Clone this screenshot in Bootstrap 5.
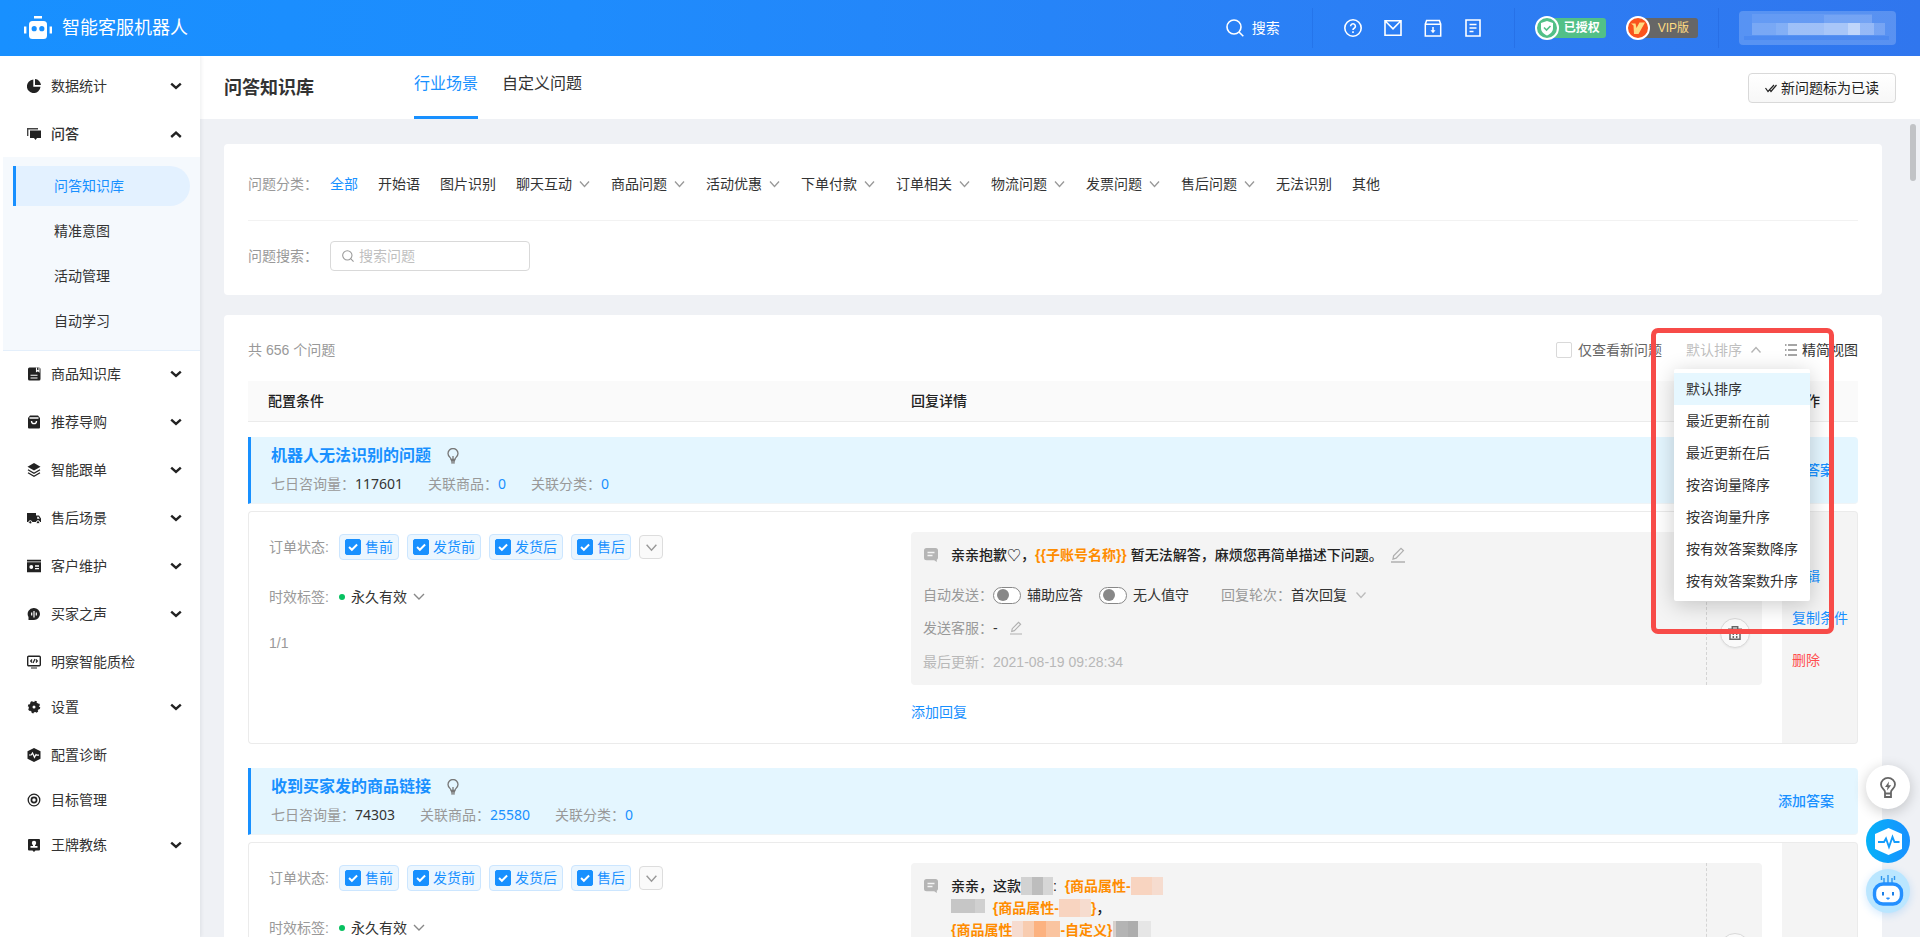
<!DOCTYPE html>
<html lang="zh-CN">
<head>
<meta charset="utf-8">
<meta name="viewport" content="width=device-width, initial-scale=1">
<title>智能客服机器人 - 问答知识库</title>
<link href="https://cdn.jsdelivr.net/npm/bootstrap@5.3.0/dist/css/bootstrap.min.css" rel="stylesheet">
<style>
  :root { --brand: #1890ff; --ink: #333; --dim: #999; --pale: #e6f7ff; --soft: #f4f4f4; --line: #ebebeb; }
  body { font: 14px/22px "Liberation Sans", "Noto Sans CJK SC", sans-serif; color: var(--ink); background: #eff1f5; }
  a { color: inherit; text-decoration: none; }
  svg { display: block; flex: none; }
  button { color: inherit; }
  .shell { height: 100vh; overflow: hidden; }
  .text-dim { color: var(--dim); }
  .text-brand { color: var(--brand); }
  .icon-btn { background: none; border: 0; padding: 0; }

  /* top bar */
  .topbar { height: 56px; flex: none; color: #fff; background: linear-gradient(90deg, #1890ff 0%, #1e8cfd 30%, #2b7ff5 70%, #3076ee 100%); padding: 0 24px; }
  .brand-name { font-size: 18px; margin-left: 10px; }
  .top-split { width: 1px; height: 40px; background: rgba(0, 40, 160, .12); margin: 0 20px 0 32px; }
  .top-split.tight { margin-left: 20px; }
  .top-split.flush { margin-left: 0; }
  .top-icons { gap: 22px; margin: 0 32px 0 11px; }
  .plan { height: 20px; font-size: 12px; font-weight: 700; line-height: 20px; border-radius: 3px; padding: 0 6px 0 17px; margin-left: 12px; position: relative; }
  .plan svg { position: absolute; left: -12px; top: -2px; }
  .plan-ok { background: #52c087; }
  .plan-vip { background: #666; color: #ffdc82; font-weight: 400; padding: 0 9px 0 20px; margin-left: 32px; }
  .account { height: 34px; width: 157px; border-radius: 4px; background: rgba(255, 255, 255, .2); padding: 3px 5px; }

  /* side menu */
  .side { width: 200px; background: #fff; flex: none; padding-top: 7px; z-index: 2; box-shadow: 1px 0 4px rgba(0, 21, 41, .08); }
  .side-item { height: 45px; padding: 0 18px 0 27px; width: 100%; text-align: left; }
  .side-item span { margin-left: 10px; flex: 1; }
  .has-sub { margin-bottom: 3px; }
  .has-sub.is-open { margin-bottom: 1px; font-weight: 500; }
  .side-sub { margin-left: 3px; background: #f5f9fd; padding: 9px 10px; border-bottom: 1px solid #e4effb; }
  .side-sub a { display: block; height: 40px; line-height: 40px; padding-left: 41px; margin-bottom: 5px; }
  .side-sub a:last-child { margin-bottom: 0; }
  .side-sub a.active { background: #e3f1ff; color: var(--brand); border-left: 3px solid var(--brand); padding-left: 38px; border-radius: 0 20px 20px 0; }

  /* page head */
  .page-head { height: 63px; flex: none; background: #fff; padding: 0 24px; }
  .page-head h1 { font-size: 18px; line-height: 24px; font-weight: 700; margin: 0; width: 190px; }
  .tab-link { height: 63px; line-height: 56px; font-size: 16px; margin-right: 24px; }
  .tab-link.active { color: var(--brand); border-bottom: 3px solid var(--brand); }
  .btn-read { height: 30px; font-size: 14px; line-height: 20px; padding: 0 16px; border: 1px solid #d9d9d9; background: linear-gradient(#fff, #f7f7f7); color: #222; border-radius: 4px; }

  .scroller { position: relative; overflow: hidden; flex: 1; padding: 25px 38px 0 24px; }
  .thumb { position: absolute; right: 4px; top: 5px; width: 6px; height: 57px; border-radius: 3px; background: #c1c3c6; }
  .panel { background: #fff; border-radius: 4px; padding: 24px; }
  .panel + .panel { margin-top: 20px; }
  .filter-row { height: 52px; padding-bottom: 20px; }
  .filter-row > .lbl, .search-row > .lbl { width: 82px; color: var(--dim); }
  .cats { gap: 20px; }
  .cats a, .cats button { display: flex; align-items: center; gap: 6px; }
  .search-row { border-top: 1px solid #f2f2f2; padding-top: 20px; }
  .search-box { width: 200px; height: 30px; border: 1px solid #d9d9d9; border-radius: 4px; padding: 0 11px; }
  .search-box input { border: 0; outline: 0; width: 100%; padding: 0; margin-left: 5px; background: none; }
  .search-box input::placeholder { color: #bfbfbf; opacity: 1; }

  /* list toolbar */
  .tools { margin-bottom: 20px; position: relative; }
  .tick { appearance: none; width: 16px; height: 16px; border: 1px solid #d9d9d9; border-radius: 2px; background: #fff; margin: 0; flex: none; }
  .tick:checked { border-color: var(--brand); background: var(--brand) url("data:image/svg+xml,%3Csvg xmlns='http://www.w3.org/2000/svg' viewBox='0 0 16 16'%3E%3Cpath d='M3.5 8l3.2 3.2 6-6' fill='none' stroke='%23fff' stroke-width='2.2'/%3E%3C/svg%3E") center/14px no-repeat; }
  .only-new { margin-left: 6px; color: #666; }
  .sort-btn { color: #bfbfbf; gap: 8px; margin: 0 22px 0 24px; }
  .sort-menu.dropdown-menu { display: block; right: 48px; top: 30px; min-width: 0; width: 136px; padding: 4px 0; border: 0; border-radius: 2px; font-size: 14px; box-shadow: 0 4px 22px rgba(0, 0, 0, .2); z-index: 5; }
  .sort-menu .dropdown-item { height: 32px; line-height: 32px; padding: 0 12px; color: var(--ink); }
  .sort-menu .dropdown-item.active { background: var(--pale); }
  .callout-frame { position: absolute; right: 24px; top: -11px; width: 183px; height: 306px; border: 5px solid #f74b48; border-radius: 7px; z-index: 6; pointer-events: none; }

  /* question table */
  .qa-table { width: 100%; table-layout: fixed; border-collapse: separate; border-spacing: 0; }
  .qa-table col.c-cond { width: 40%; }
  .qa-table col.c-ops { width: 76px; }
  .qa-table td, .qa-table th { vertical-align: top; padding: 0; }
  .qa-table thead th { height: 41px; background: #fafafa; border-bottom: 1px solid var(--line); vertical-align: middle; font-weight: 500; color: #222; }
  .qa-table thead th:nth-child(1) { padding-left: 20px; }
  .qa-table thead th:nth-child(2) { padding-left: 19px; }
  .qa-table thead th:nth-child(3) { padding-left: 10px; }
  .qa-table .bar-cell { padding: 24px 0 7px; }
  .qa-table tbody:nth-of-type(1) .bar-cell { padding-top: 15px; }
  .qa-table tr.multi { height: 400px; }
  .q-bar { height: 67px; background: #e4f6ff; border-left: 3px solid var(--brand); border-bottom: 1px solid #f0f4f6; border-radius: 0 4px 4px 0; padding: 7px 24px 8px 20px; }
  .q-bar h2 { font-size: 16px; line-height: 24px; font-weight: 700; margin: 0 16px 0 0; }
  .q-stats { margin-top: 5px; gap: 25px; color: var(--dim); }
  .q-stats b { font: 400 14px/22px "Noto Sans", sans-serif; }
  .q-stats b.n { color: var(--ink); }
  .q-bar .add { font-weight: 500; }
  .qa-table .cond { border: 1px solid var(--line); border-right: 0; border-radius: 4px 0 0 4px; padding: 22px 20px 0; }
  .qa-table .detail { border: solid var(--line); border-width: 1px 0; padding: 20px 20px 20px 19px; }
  .qa-table .ops { border: 1px solid var(--line); border-left: 0; border-radius: 0 4px 4px 0; background: var(--soft); padding-left: 10px; vertical-align: middle; }
  .ops a { display: block; margin-bottom: 20px; color: var(--brand); }
  .ops a.del { color: #ff4d4f; }
  .row-lbl { width: 70px; color: var(--dim); flex: none; }
  .stage { height: 26px; border: 1px solid #cce6ff; background: #ebf6ff; border-radius: 4px; padding: 0 5px; color: var(--brand); gap: 4px; margin-right: 8px; }
  .more { width: 24px; height: 24px; border: 1px solid #ddd; border-radius: 4px; background: #fafafa; }
  .validity { margin: 26px 0 24px; }
  .dot { width: 6px; height: 6px; border-radius: 50%; background: #07c160; margin-right: 6px; }
  .pick { appearance: none; border: 0; padding: 0 18px 0 0; color: inherit; background: url("data:image/svg+xml,%3Csvg xmlns='http://www.w3.org/2000/svg' viewBox='0 0 12 12'%3E%3Cpath d='M1 3l5 5 5-5' fill='none' stroke='%23888' stroke-width='1.4'/%3E%3C/svg%3E") right center/12px no-repeat; }
  .turn-lbl { margin-left: 32px; }
  .pick.turn { padding-right: 20px; background-image: url("data:image/svg+xml,%3Csvg xmlns='http://www.w3.org/2000/svg' viewBox='0 0 12 12'%3E%3Cpath d='M1.5 3.500l4.500 5 4.500-5' fill='none' stroke='%23bbb' stroke-width='1.300'/%3E%3C/svg%3E"); }
  .reply { background: var(--soft); border-radius: 4px; min-height: 153px; }
  .multi .reply { min-height: 170px; }
  .reply-body { flex: 1; padding: 12px; border-right: 1px dashed #d4d4d4; }
  .reply-acts { width: 55px; gap: 18px; }
  .round { width: 30px; height: 30px; border-radius: 50%; border: 1px solid #d9d9d9; background: #fafafa; padding: 0; color: #666; box-shadow: 0 1px 2px rgba(0, 0, 0, .06); }
  .msg { font-weight: 500; color: #222; }
  .msg > svg { margin: 4px 13px 0 1px; }
  .msg .var { color: #ff8c00; font-weight: 700; }
  .auto { margin-top: 18px; }
  .agent { margin-top: 11px; }
  .agent button { margin-left: 12px; }
  .updated { margin-top: 12px; color: #b8b8b8; }
  .toggle.form-check-input { width: 28px; height: 17px; min-height: 0; margin: 0 6px 0 0; float: none; border: 1px solid #888; border-radius: 9px; background: #fff url("data:image/svg+xml,%3Csvg xmlns='http://www.w3.org/2000/svg' viewBox='-6 -6 12 12'%3E%3Ccircle r='6' fill='%23888'/%3E%3C/svg%3E") 3px center/12px no-repeat; }
  .mosaic { display: inline-block; vertical-align: top; height: 18px; margin-top: 2px; }
  .m-gray { width: 32px; background: linear-gradient(90deg, #d2d2d2 35%, #bdbdbd 35% 70%, #d6d6d6 70%); }
  .m-peach { width: 32px; background: linear-gradient(90deg, #f8d4c0 66%, #f6dccf 66%); }
  .m-flat { width: 34px; height: 14px; background: linear-gradient(90deg, #c6c6c6 70%, #d0d0d0 70%); }
  .m-orange { width: 48px; background: linear-gradient(90deg, #f6dcd0 22%, #f8ccb0 22% 46%, #fcb280 46% 70%, #fac4a0 70%); }
  .m-dark { width: 38px; background: linear-gradient(90deg, #d8d0cc 8%, #b4b4b4 8% 40%, #adadad 40% 66%, #e6e6e6 66%); }
  .add-reply { display: inline-block; margin-top: 16px; color: var(--brand); }

  /* floating helpers */
  .floats { position: fixed; right: 10px; bottom: 24px; z-index: 10; }
  .floats button { width: 44px; height: 44px; border-radius: 50%; border: 0; padding: 0; display: flex; align-items: center; justify-content: center; }
  .f-tip { background: #fff; box-shadow: 0 3px 14px rgba(0, 0, 0, .2); margin-bottom: 10px; color: #666; }
  .f-check { background: linear-gradient(90deg, #06b2f8, #1890ff); margin-bottom: 6px; }
  .f-bot { background: #bae6ff; box-shadow: 0 2px 8px rgba(24, 144, 255, .2); }
</style>
</head>
<body>
<svg width="0" height="0" class="position-absolute" aria-hidden="true">
  <symbol id="dn" viewBox="0 0 12 12"><path d="M1.500 3.500 6 8.500l4.500-5" fill="none" stroke="currentColor" stroke-width="1.300"/></symbol>
  <symbol id="caret" viewBox="0 0 10 10"><path d="M1 3l4 3.600L9 3" fill="none" stroke="#222" stroke-width="2"/></symbol>
  <symbol id="caret-up" viewBox="0 0 10 10"><path d="M1 7.500l4-3.600 4 3.600" fill="none" stroke="#222" stroke-width="2"/></symbol>
  <symbol id="lens" viewBox="0 0 18 18"><circle cx="8" cy="8" r="7" fill="none" stroke="currentColor" stroke-width="1.600"/><path d="M13 13l4.300 4.300" stroke="currentColor" stroke-width="1.600"/></symbol>
  <symbol id="bulb" viewBox="0 0 12 16"><path d="M4 11.500C4 9.500 1 8.600 1 5.500a5 5 0 0 1 10 0c0 3.100-3 4-3 6zM4 13h4M4.200 14.800h3.600M6 8v3" fill="none" stroke="#777" stroke-width="1.300"/></symbol>
  <symbol id="chat" viewBox="0 0 14 14"><path d="M2.500 0h9A2.500 2.500 0 0 1 14 2.500v7a2.500 2.500 0 0 1-1.200 2.200V14l-2.600-1.800H2.500A2.500 2.500 0 0 1 0 9.700V2.500A2.500 2.500 0 0 1 2.500 0z" fill="#b5b5b5"/><path d="M3.500 4.500h7M3.500 7.500h5" stroke="#f4f4f4" stroke-width="1.300"/></symbol>
  <symbol id="pen" viewBox="0 0 14 16"><path d="M2 12l.6-3.200L10 1.300l2.400 2.300-7.300 7.500zM0 15h14" fill="none" stroke="#b0b0b0" stroke-width="1.300"/></symbol>
  <symbol id="bin" viewBox="0 0 14 14"><path d="M0 3.200h14M4.300 3V.8h5.400V3M2 3.500v9.800h10V3.500M5.300 10v2M8.700 10v2M5.300 6v3M8.700 6v3" fill="none" stroke="currentColor" stroke-width="1.500"/></symbol>
</svg>

<div class="shell d-flex flex-column">
  <header class="topbar d-flex align-items-center">
    <svg width="28" height="24" viewBox="0 0 28 24"><path d="M10 0h8v2.600h-8zM0 10.500h2.400v7H0zM25.600 10.500H28v7h-2.400z" fill="#fff"/><rect x="5" y="5" width="18" height="18" rx="3.500" fill="#fff"/><circle cx="10.200" cy="12.700" r="2.600" fill="#1890ff"/><circle cx="17.800" cy="12.700" r="2.600" fill="#1890ff"/></svg>
    <span class="brand-name">智能客服机器人</span>
    <button class="icon-btn d-flex align-items-center ms-auto" type="button"><svg width="18" height="18" class="me-2"><use href="#lens"/></svg>搜索</button>
    <span class="top-split"></span>
    <nav class="top-icons d-flex align-items-center" aria-label="快捷入口">
      <a href="#" aria-label="帮助"><svg width="18" height="18" viewBox="0 0 18 18" fill="none" stroke="#fff" stroke-width="1.600"><circle cx="9" cy="9" r="8.200"/><path d="M6.600 7.200a2.400 2.400 0 1 1 3.600 2.100C9.300 9.800 9 10.200 9 11M9 12.300v1.700"/></svg></a>
      <a href="#" aria-label="消息"><svg width="18" height="18" viewBox="0 0 18 18" fill="none" stroke="#fff" stroke-width="1.600"><path d="M1 1.800h16v14.400H1zM1.500 2.300 9 9.800l7.500-7.500"/></svg></a>
      <a href="#" aria-label="下载"><svg width="18" height="18" viewBox="0 0 18 18" fill="none" stroke="#fff" stroke-width="1.500"><path d="M1.300 5.300h15.400V17H1.300zM1.300 5.300 2.600 1.500h12.800l1.300 3.800M9 8v5"/><path d="M6.500 11.300h5L9 14.200z" fill="#fff" stroke="none"/></svg></a>
      <a href="#" aria-label="文档"><svg width="18" height="18" viewBox="0 0 18 18" fill="none" stroke="#fff" stroke-width="1.600"><path d="M2 1h14v16H2zM5.500 5.500h7M5.500 9h7M5.500 12.500h4"/></svg></a>
    </nav>
    <span class="top-split flush"></span>
    <span class="plan plan-ok"><svg width="24" height="24" viewBox="0 0 24 24"><circle cx="12" cy="12" r="11" fill="#52c087" stroke="#fff" stroke-width="2"/><path d="M12 5l6 2v5c0 4-3 6-6 7.500C9 18 6 16 6 12V7z" fill="#fff"/><path d="M9 11.500l2.500 2.500 4-4" fill="none" stroke="#52c087" stroke-width="1.600"/></svg>已授权</span>
    <span class="plan plan-vip"><svg width="24" height="24" viewBox="0 0 24 24"><circle cx="12" cy="12" r="11" fill="#fa541c" stroke="#fff" stroke-width="2"/><path d="M5 7.500h4.500L10.500 12 13.500 6.500h5.500L12.500 18H8L7.500 9.500z" fill="#ffdc82"/></svg>VIP版</span>
    <span class="top-split tight"></span>
    <div class="account" role="img" aria-label="当前账号">
      <svg width="146" height="27" viewBox="0 0 146 27" shape-rendering="crispEdges"><g fill="#fff"><path d="M8 0h120v9H8z" opacity=".08"/><path d="M80 1h48v8H80z" opacity=".1"/><path d="M8 9h24v12H8z" opacity=".2"/><path d="M32 9h12v12H32z" opacity=".26"/><path d="M44 9h36v12H44z" opacity=".42"/><path d="M80 9h24v12H80z" opacity=".48"/><path d="M104 9h12v12h-12z" opacity=".62"/><path d="M116 9h14v12h-14z" opacity=".36"/><path d="M130 9h11v12h-11z" opacity=".18"/></g><path d="M0 22h145v4H0z" fill="#1d6bea" opacity=".2"/></svg>
    </div>
  </header>

  <div class="d-flex flex-fill overflow-hidden">
    <aside class="side">
      <button class="side-item has-sub icon-btn d-flex align-items-center"><svg width="14" height="14" viewBox="0 0 14 14" fill="#222"><path d="M6.300.5V7.700H13.500A6.800 6.800 0 1 1 6.300.5z"/><path d="M8 0a6.500 6.500 0 0 1 6 6H8z"/></svg><span>数据统计</span><svg width="12" height="12"><use href="#caret"/></svg></button>
      <button class="side-item has-sub is-open icon-btn d-flex align-items-center" aria-expanded="true"><svg width="14" height="14" viewBox="0 0 14 14"><path d="M.7 9V1.700H11" fill="none" stroke="#444" stroke-width="1.400"/><path d="M3 3.500h11v7.500h-4l-1.500 2L7 11H3z" fill="#222"/></svg><span>问答</span><svg width="12" height="12"><use href="#caret-up"/></svg></button>
      <nav class="side-sub">
        <a href="#" class="active">问答知识库</a>
        <a href="#">精准意图</a>
        <a href="#">活动管理</a>
        <a href="#">自动学习</a>
      </nav>
      <button class="side-item has-sub icon-btn d-flex align-items-center"><svg width="14" height="14" viewBox="0 0 14 14"><rect x="1" y=".5" width="12.500" height="13" rx="1.500" fill="#222"/><path d="M9.500.5v4l1.300-1 1.200 1v-4M3.500 8.300h7M3.500 11h7" stroke="#fff" stroke-width="1.100" fill="none"/></svg><span>商品知识库</span><svg width="12" height="12"><use href="#caret"/></svg></button>
      <button class="side-item has-sub icon-btn d-flex align-items-center"><svg width="14" height="14" viewBox="0 0 14 14"><path d="M3 .5h8l2 2.500v9.500a1 1 0 0 1-1 1H2a1 1 0 0 1-1-1V3z" fill="#222"/><path d="M2.500 3h9M4.500 6a2.500 2.700 0 0 0 5 0" stroke="#fff" stroke-width="1.300" fill="none"/></svg><span>推荐导购</span><svg width="12" height="12"><use href="#caret"/></svg></button>
      <button class="side-item has-sub icon-btn d-flex align-items-center"><svg width="14" height="14" viewBox="0 0 14 14"><path d="M7 0l6.500 3.700L7 7.500.5 3.700z" fill="#222"/><path d="M1 6.700l6 3.500 6-3.500M1 9.700l6 3.500 6-3.500" stroke="#222" stroke-width="1.300" fill="none"/></svg><span>智能跟单</span><svg width="12" height="12"><use href="#caret"/></svg></button>
      <button class="side-item has-sub icon-btn d-flex align-items-center"><svg width="14" height="14" viewBox="0 0 14 14"><path d="M0 2h9v9H0zM9 4.500h3l2 3V11H9z" fill="#222"/><circle cx="3.300" cy="11.300" r="1.600" fill="#222" stroke="#fff"/><circle cx="11" cy="11.300" r="1.600" fill="#222" stroke="#fff"/><path d="M10.200 5.700h1.300l1.200 2h-2.500z" fill="#fff"/></svg><span>售后场景</span><svg width="12" height="12"><use href="#caret"/></svg></button>
      <button class="side-item has-sub icon-btn d-flex align-items-center"><svg width="14" height="14" viewBox="0 0 14 14"><path d="M0 .8h14v1.600H0zM0 3.200h14v10H0z" fill="#222"/><circle cx="4.300" cy="8" r="1.900" fill="#fff"/><path d="M8 7h4M8 9.600h4" stroke="#fff" stroke-width="1.300"/></svg><span>客户维护</span><svg width="12" height="12"><use href="#caret"/></svg></button>
      <button class="side-item has-sub icon-btn d-flex align-items-center"><svg width="14" height="14" viewBox="0 0 14 14"><path d="M7 1a6 6 0 1 1 0 12H1.500V10A6 6 0 0 1 7 1z" fill="#222"/><path d="M4.700 5.500v3M7 4v6.500M9.300 5.500v3" stroke="#fff" stroke-width="1.200"/></svg><span>买家之声</span><svg width="12" height="12"><use href="#caret"/></svg></button>
      <a href="#" class="side-item d-flex align-items-center"><svg width="14" height="14" viewBox="0 0 14 14"><rect x=".7" y="1.200" width="12.600" height="9.600" rx="1" fill="none" stroke="#222" stroke-width="1.400"/><path d="M4 13h6M5 4.500 3.700 6 5 7.500M6 8l2-4M9 4.500 10.300 6 9 7.500" stroke="#222" stroke-width="1.200" fill="none"/></svg><span>明察智能质检</span></a>
      <button class="side-item has-sub icon-btn d-flex align-items-center"><svg width="14" height="14" viewBox="0 0 14 14"><circle cx="7" cy="7" r="3.400" fill="none" stroke="#222" stroke-width="3.800"/><circle cx="7" cy="7" r="5.300" fill="none" stroke="#222" stroke-width="1.800" stroke-dasharray="2.080"/></svg><span>设置</span><svg width="12" height="12"><use href="#caret"/></svg></button>
      <a href="#" class="side-item d-flex align-items-center has-icon"><svg width="14" height="14" viewBox="0 0 14 14"><path d="M7 0l6.500 3.200v7.600L7 14 .5 10.800V3.200z" fill="#222"/><path d="M2 7h2.200l1.300-2L7.500 9.300 9 6.500l.7.700H12" fill="none" stroke="#fff" stroke-width="1.200"/></svg><span>配置诊断</span></a>
      <a href="#" class="side-item d-flex align-items-center"><svg width="14" height="14" viewBox="0 0 14 14" fill="none" stroke="#222"><circle cx="7" cy="7" r="5.800" stroke-width="1.300"/><circle cx="7" cy="7" r="2.600" stroke-width="1.700"/></svg><span>目标管理</span></a>
      <button class="side-item has-sub icon-btn d-flex align-items-center"><svg width="14" height="14" viewBox="0 0 14 14"><path d="M2 1h10a1 1 0 0 1 1 1v9.500a1 1 0 0 1-1 1H8.500L7 14l-1.500-1.500H2a1 1 0 0 1-1-1V2a1 1 0 0 1 1-1z" fill="#222"/><circle cx="7" cy="5" r="2.200" fill="#fff"/><path d="M6 6h2v2h2.500v1.800h-7V8H6z" fill="#fff"/></svg><span>王牌教练</span><svg width="12" height="12"><use href="#caret"/></svg></button>
    </aside>

    <main class="d-flex flex-column flex-fill overflow-hidden">
      <div class="page-head d-flex align-items-center">
        <h1>问答知识库</h1>
        <nav class="d-flex"><a href="#" class="tab-link active">行业场景</a><a href="#" class="tab-link">自定义问题</a></nav>
        <button class="btn btn-read d-flex align-items-center ms-auto" type="button"><svg width="12" height="10" viewBox="0 0 12 10" class="me-1" fill="none" stroke="#222" stroke-width="1.200"><path d="M.5 5l2.500 3.500L9 2M4.500 6.500 6 8.500l5.500-6.500"/></svg>新问题标为已读</button>
      </div>

      <div class="scroller">
        <div class="thumb"></div>
        <section class="panel">
          <div class="filter-row d-flex align-items-center">
            <span class="lbl">问题分类：</span>
            <nav class="cats d-flex">
              <a href="#" class="text-brand">全部</a>
              <a href="#">开始语</a>
              <a href="#">图片识别</a>
              <button class="icon-btn">聊天互动<svg width="13" height="12" class="text-dim"><use href="#dn"/></svg></button>
              <button class="icon-btn">商品问题<svg width="13" height="12" class="text-dim"><use href="#dn"/></svg></button>
              <button class="icon-btn">活动优惠<svg width="13" height="12" class="text-dim"><use href="#dn"/></svg></button>
              <button class="icon-btn">下单付款<svg width="13" height="12" class="text-dim"><use href="#dn"/></svg></button>
              <button class="icon-btn">订单相关<svg width="13" height="12" class="text-dim"><use href="#dn"/></svg></button>
              <button class="icon-btn">物流问题<svg width="13" height="12" class="text-dim"><use href="#dn"/></svg></button>
              <button class="icon-btn">发票问题<svg width="13" height="12" class="text-dim"><use href="#dn"/></svg></button>
              <button class="icon-btn">售后问题<svg width="13" height="12" class="text-dim"><use href="#dn"/></svg></button>
              <a href="#">无法识别</a>
              <a href="#">其他</a>
            </nav>
          </div>
          <div class="search-row d-flex align-items-center">
            <label class="lbl" for="q">问题搜索：</label>
            <div class="search-box d-flex align-items-center"><svg width="12" height="12" class="text-dim"><use href="#lens"/></svg><input id="q" type="text" placeholder="搜索问题"></div>
          </div>
        </section>

        <section class="panel">
          <div class="tools d-flex align-items-center">
            <span class="text-dim me-auto">共 656 个问题</span>
            <input class="tick" type="checkbox" id="only-new"><label for="only-new" class="only-new">仅查看新问题</label>
            <button class="sort-btn icon-btn d-flex align-items-center" type="button" aria-expanded="true">默认排序<svg width="12" height="12" viewBox="0 0 12 12"><path d="M1.500 8.500 6 3.500l4.500 5" fill="none" stroke="#b5b5b5" stroke-width="1.400"/></svg></button>
            <button class="icon-btn d-flex align-items-center" type="button"><svg width="14" height="12" viewBox="0 0 14 12" class="me-1"><path d="M4 1h9M4 6h9M4 11h9M1 1h1.500M1 6h1.500M1 11h1.500" stroke="#888" stroke-width="1.300"/></svg>精简视图</button>
            <ul class="dropdown-menu sort-menu">
              <li><a class="dropdown-item active" href="#">默认排序</a></li>
              <li><a class="dropdown-item" href="#">最近更新在前</a></li>
              <li><a class="dropdown-item" href="#">最近更新在后</a></li>
              <li><a class="dropdown-item" href="#">按咨询量降序</a></li>
              <li><a class="dropdown-item" href="#">按咨询量升序</a></li>
              <li><a class="dropdown-item" href="#">按有效答案数降序</a></li>
              <li><a class="dropdown-item" href="#">按有效答案数升序</a></li>
            </ul>
            <div class="callout-frame"></div>
          </div>

          <table class="qa-table">
            <colgroup><col class="c-cond"><col><col class="c-ops"></colgroup>
            <thead><tr><th>配置条件</th><th>回复详情</th><th>操作</th></tr></thead>
            <tbody>
              <tr><td colspan="3" class="bar-cell">
                <div class="q-bar d-flex align-items-center justify-content-between">
                  <div>
                    <div class="d-flex align-items-center"><h2 class="text-brand">机器人无法识别的问题</h2><svg width="12" height="16"><use href="#bulb"/></svg></div>
                    <div class="q-stats d-flex"><span>七日咨询量：<b class="n">117601</b></span><span>关联商品：<b class="text-brand">0</b></span><span>关联分类：<b class="text-brand">0</b></span></div>
                  </div>
                  <a href="#" class="add text-brand">添加答案</a>
                </div>
              </td></tr>
              <tr>
                <td class="cond">
                  <div class="d-flex align-items-center">
                    <span class="row-lbl">订单状态:</span>
                    <label class="stage d-flex align-items-center"><input type="checkbox" class="tick" checked>售前</label>
                    <label class="stage d-flex align-items-center"><input type="checkbox" class="tick" checked>发货前</label>
                    <label class="stage d-flex align-items-center"><input type="checkbox" class="tick" checked>发货后</label>
                    <label class="stage d-flex align-items-center"><input type="checkbox" class="tick" checked>售后</label>
                    <button class="more d-flex align-items-center justify-content-center p-0 text-dim" type="button" aria-label="更多状态"><svg width="13" height="13"><use href="#dn"/></svg></button>
                  </div>
                  <div class="validity d-flex align-items-center"><label class="row-lbl" for="valid1">时效标签:</label><span class="dot"></span><select class="pick" id="valid1"><option>永久有效</option></select></div>
                  <div class="text-dim">1/1</div>
                </td>
                <td class="detail">
                  <div class="reply d-flex">
                    <div class="reply-body">
                      <div class="msg d-flex"><svg width="14" height="14"><use href="#chat"/></svg><div>亲亲抱歉♡，<span class="var">{{子账号名称}}</span> 暂无法解答，麻烦您再简单描述下问题。</div><button class="icon-btn ms-2" type="button" aria-label="编辑回复"><svg width="14" height="16"><use href="#pen"/></svg></button></div>
                      <div class="auto d-flex align-items-center">
                        <span class="row-lbl">自动发送：</span>
                        <input type="checkbox" class="form-check-input toggle" id="as1"><label for="as1">辅助应答</label>
                        <input type="checkbox" class="form-check-input toggle ms-3" id="as2"><label for="as2">无人值守</label>
                        <label class="text-dim turn-lbl" for="turn1">回复轮次：</label>
                        <select class="pick turn" id="turn1"><option>首次回复</option></select>
                      </div>
                      <div class="agent d-flex align-items-center"><span class="row-lbl">发送客服：</span>-<button class="icon-btn" type="button" aria-label="编辑客服"><svg width="12" height="14"><use href="#pen"/></svg></button></div>
                      <div class="updated">最后更新：2021-08-19 09:28:34</div>
                    </div>
                    <div class="reply-acts d-flex flex-column align-items-center justify-content-center">
                      <button class="round d-flex align-items-center justify-content-center" type="button" aria-label="复制"><svg width="14" height="14" viewBox="0 0 14 14" fill="none" stroke="currentColor" stroke-width="1.300"><path d="M1 1h8v8H1zM5 12.500h7.500V5"/></svg></button>
                      <button class="round d-flex align-items-center justify-content-center" type="button" aria-label="删除"><svg width="14" height="14"><use href="#bin"/></svg></button>
                    </div>
                  </div>
                  <a href="#" class="add-reply">添加回复</a>
                </td>
                <td class="ops"><a href="#">编辑</a><a href="#">复制条件</a><a href="#" class="del">删除</a></td>
              </tr>
            </tbody>
            <tbody>
              <tr><td colspan="3" class="bar-cell">
                <div class="q-bar d-flex align-items-center justify-content-between">
                  <div>
                    <div class="d-flex align-items-center"><h2 class="text-brand">收到买家发的商品链接</h2><svg width="12" height="16"><use href="#bulb"/></svg></div>
                    <div class="q-stats d-flex"><span>七日咨询量：<b class="n">74303</b></span><span>关联商品：<b class="text-brand">25580</b></span><span>关联分类：<b class="text-brand">0</b></span></div>
                  </div>
                  <a href="#" class="add text-brand">添加答案</a>
                </div>
              </td></tr>
              <tr class="multi">
                <td class="cond">
                  <div class="d-flex align-items-center">
                    <span class="row-lbl">订单状态:</span>
                    <label class="stage d-flex align-items-center"><input type="checkbox" class="tick" checked>售前</label>
                    <label class="stage d-flex align-items-center"><input type="checkbox" class="tick" checked>发货前</label>
                    <label class="stage d-flex align-items-center"><input type="checkbox" class="tick" checked>发货后</label>
                    <label class="stage d-flex align-items-center"><input type="checkbox" class="tick" checked>售后</label>
                    <button class="more d-flex align-items-center justify-content-center p-0 text-dim" type="button" aria-label="更多状态"><svg width="13" height="13"><use href="#dn"/></svg></button>
                  </div>
                  <div class="validity d-flex align-items-center"><label class="row-lbl" for="valid2">时效标签:</label><span class="dot"></span><select class="pick" id="valid2"><option>永久有效</option></select></div>
                </td>
                <td class="detail">
                  <div class="reply d-flex">
                    <div class="reply-body">
                      <div class="msg d-flex"><svg width="14" height="14"><use href="#chat"/></svg>
                        <div>
                          <div>亲亲，这款<span class="mosaic m-gray"></span>: &nbsp;<span class="var">{商品属性-</span><span class="mosaic m-peach"></span></div>
                          <div><span class="mosaic m-flat"></span>&nbsp; <span class="var">{商品属性-</span><span class="mosaic m-peach"></span><span class="var">}</span>，</div>
                          <div><span class="var">{商品属性</span><span class="mosaic m-orange"></span><span class="var">-自定义}</span><span class="mosaic m-dark"></span></div>
                        </div>
                      </div>
                    </div>
                    <div class="reply-acts d-flex flex-column align-items-center justify-content-center">
                      <button class="round d-flex align-items-center justify-content-center" type="button" aria-label="删除"><svg width="14" height="14"><use href="#bin"/></svg></button>
                    </div>
                  </div>
                </td>
                <td class="ops"></td>
              </tr>
            </tbody>
          </table>
        </section>
      </div>
    </main>
  </div>
</div>

<div class="floats">
  <button class="f-tip" type="button" aria-label="提示"><svg width="16" height="21" viewBox="0 0 16 21" fill="none" stroke="currentColor" stroke-width="1.800"><path d="M5 15c0-2.500-4-3.500-4-7.500a7 6.600 0 0 1 14 0c0 4-4 5-4 7.500v5H5zM5 16.500h6"/><path d="M9 4.500 5 10h2.500L7 13.500l4.200-5.300H8.500z" fill="currentColor" stroke="none"/></svg></button>
  <button class="f-check" type="button" aria-label="诊断"><svg width="27" height="27" viewBox="0 0 27 27"><path d="M13.500 0 27 6v15l-13.500 6L0 21V6z" fill="#fff"/><path d="M3 14h6l2-3.500 3 8.500L17.500 9l2 5h5" fill="none" stroke="#149cfb" stroke-width="1.900"/></svg></button>
  <button class="f-bot" type="button" aria-label="助手"><svg width="32" height="32" viewBox="0 0 32 32"><path d="M16 0v8M12 3v5M20 3v5M9.500 1v4M22.500 1v4" stroke="#2f96ee" stroke-width="1.400"/><rect x="2.500" y="9" width="27" height="20" rx="8.500" fill="#fff" stroke="#2490ff" stroke-width="3.400"/><path d="M11 17v3.500M21 17v3.500" stroke="#1c7fe6" stroke-width="2"/><path d="M14.500 23h3L16 24.500z" fill="#2490ff" stroke="#2490ff"/></svg></button>
</div>
<script src="https://cdn.jsdelivr.net/npm/bootstrap@5.3.0/dist/js/bootstrap.bundle.min.js"></script>
</body>
</html>
